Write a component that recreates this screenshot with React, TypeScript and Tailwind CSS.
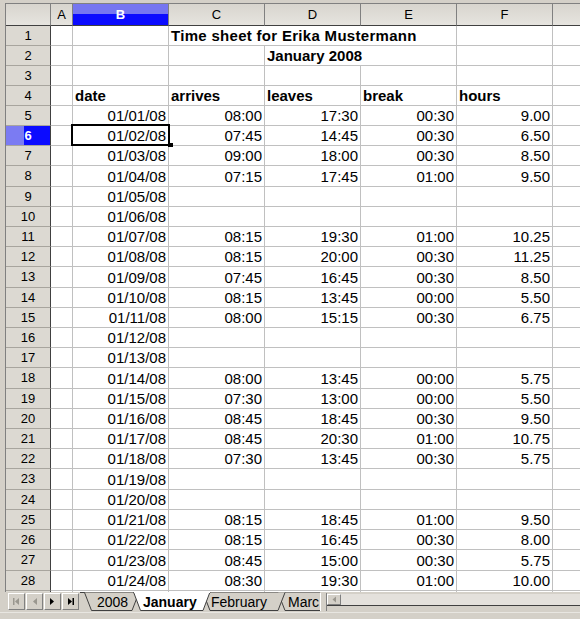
const FONT = "font-['Liberation_Sans',Arial,sans-serif]";

type Entry = [string, string?, string?, string?, string?];

// sheet rows 5..28: date, arrives, leaves, break, hours
const entries: Entry[] = [
  ["01/01/08", "08:00", "17:30", "00:30", "9.00"],
  ["01/02/08", "07:45", "14:45", "00:30", "6.50"],
  ["01/03/08", "09:00", "18:00", "00:30", "8.50"],
  ["01/04/08", "07:15", "17:45", "01:00", "9.50"],
  ["01/05/08"],
  ["01/06/08"],
  ["01/07/08", "08:15", "19:30", "01:00", "10.25"],
  ["01/08/08", "08:15", "20:00", "00:30", "11.25"],
  ["01/09/08", "07:45", "16:45", "00:30", "8.50"],
  ["01/10/08", "08:15", "13:45", "00:00", "5.50"],
  ["01/11/08", "08:00", "15:15", "00:30", "6.75"],
  ["01/12/08"],
  ["01/13/08"],
  ["01/14/08", "08:00", "13:45", "00:00", "5.75"],
  ["01/15/08", "07:30", "13:00", "00:00", "5.50"],
  ["01/16/08", "08:45", "18:45", "00:30", "9.50"],
  ["01/17/08", "08:45", "20:30", "01:00", "10.75"],
  ["01/18/08", "07:30", "13:45", "00:30", "5.75"],
  ["01/19/08"],
  ["01/20/08"],
  ["01/21/08", "08:15", "18:45", "01:00", "9.50"],
  ["01/22/08", "08:15", "16:45", "00:30", "8.00"],
  ["01/23/08", "08:45", "15:00", "00:30", "5.75"],
  ["01/24/08", "08:30", "19:30", "01:00", "10.00"],
];

// a few rows render one pixel taller
const tallRows = [8, 13, 18, 23, 27];

const cell = "w-[96px] shrink-0 border-r border-b border-[#c0c0c0] bg-white flex items-end pb-[1px] leading-[16px] whitespace-nowrap";
const num = `${cell} justify-end pr-[2px]`;
const head = `${cell} pl-[2px] font-bold`;

function RowHeader({ n }: { n: number }) {
  if (n === 6) {
    return (
      <div className="w-[45px] shrink-0 border-r border-r-[#404040] border-b border-b-[#a8a59e] bg-linear-to-r from-[#7b7bf2] from-40% to-[#0b0bff] to-40% flex items-center justify-center text-[13px] font-bold text-white">
        {n}
      </div>
    );
  }
  return (
    <div className="w-[45px] shrink-0 border-r border-r-[#404040] border-b border-b-[#a8a59e] bg-[#dcd9d2] flex items-center justify-center text-[13px] text-black">
      {n}
    </div>
  );
}

function ColA() {
  return <div className="w-[22px] shrink-0 border-r border-b border-[#c0c0c0] bg-white" />;
}

function ColG() {
  return <div className="flex-1 border-b border-[#c0c0c0] bg-white" />;
}

function ColumnHeaders() {
  const letters = ["C", "D", "E", "F"];
  return (
    <div className="flex h-[22px] text-[13px]">
      <div className="w-[45px] shrink-0 border-r border-b border-r-[#808080] border-b-[#404040] bg-linear-to-b from-[#d8d5ce] to-[#e6e4df]" />
      <div className="w-[22px] shrink-0 border-r border-b border-r-[#808080] border-b-[#404040] bg-linear-to-b from-[#d8d5ce] to-[#e6e4df] flex items-center justify-center">
        A
      </div>
      <div className="w-[96px] shrink-0 border-r border-b border-r-[#808080] border-b-[#404040] bg-linear-to-b from-[#7676f0] from-50% to-[#0b0bff] to-50% flex items-center justify-center font-bold text-white">
        B
      </div>
      {letters.map((l) => (
        <div
          key={l}
          className="w-[96px] shrink-0 border-r border-b border-r-[#808080] border-b-[#404040] bg-linear-to-b from-[#d8d5ce] to-[#e6e4df] flex items-center justify-center"
        >
          {l}
        </div>
      ))}
      <div className="flex-1 border-b border-b-[#404040] bg-linear-to-b from-[#d8d5ce] to-[#e6e4df]" />
    </div>
  );
}

function Sheet() {
  return (
    <div className={`h-[589px] overflow-hidden border-l border-t border-[#808080] ml-[5px] mt-[3px] text-[15px] text-black ${FONT}`}>
      <ColumnHeaders />

      {/* 1: title runs across C..E */}
      <div className="flex h-[20px]">
        <RowHeader n={1} />
        <ColA />
        <div className={cell} />
        <div className="w-[288px] shrink-0 border-r border-b border-[#c0c0c0] bg-white flex items-end pb-[1px] pl-[2px] leading-[16px] font-bold tracking-[0.02em] whitespace-nowrap">
          Time sheet for Erika Mustermann
        </div>
        <div className={cell} />
        <ColG />
      </div>

      {/* 2: month */}
      <div className="flex h-[20px]">
        <RowHeader n={2} />
        <ColA />
        <div className={cell} />
        <div className={cell} />
        <div className="w-[192px] shrink-0 border-r border-b border-[#c0c0c0] bg-white flex items-end pb-[1px] pl-[2px] leading-[16px] font-bold whitespace-nowrap">
          January 2008
        </div>
        <div className={cell} />
        <ColG />
      </div>

      <div className="flex h-[20px]">
        <RowHeader n={3} />
        <ColA />
        <div className={cell} />
        <div className={cell} />
        <div className={cell} />
        <div className={cell} />
        <div className={cell} />
        <ColG />
      </div>

      <div className="flex h-[20px]">
        <RowHeader n={4} />
        <ColA />
        <div className={head}>date</div>
        <div className={head}>arrives</div>
        <div className={head}>leaves</div>
        <div className={head}>break</div>
        <div className={head}>hours</div>
        <ColG />
      </div>

      {entries.map((e, i) => {
        const n = i + 5;
        const tall = tallRows.includes(n);
        return (
          <div key={n} className={tall ? "flex h-[21px]" : "flex h-[20px]"}>
            <RowHeader n={n} />
            <ColA />
            <div className={`${num} relative`}>
              {e[0]}
              {n === 6 && (
                <>
                  <div className="absolute -left-[2px] -top-[2px] w-[99px] h-[22px] border-2 border-black z-10" />
                  <div className="absolute left-[95px] top-[17px] w-[5px] h-[4px] bg-black z-20" />
                </>
              )}
            </div>
            <div className={num}>{e[1]}</div>
            <div className={num}>{e[2]}</div>
            <div className={num}>{e[3]}</div>
            <div className={num}>{e[4]}</div>
            <ColG />
          </div>
        );
      })}

      <div className="flex h-[20px]">
        <RowHeader n={29} />
        <ColA />
        <div className={cell} />
        <div className={cell} />
        <div className={cell} />
        <div className={cell} />
        <div className={cell} />
        <ColG />
      </div>
    </div>
  );
}

function NavButton({ dir, end, active }: { dir: "l" | "r"; end?: boolean; active?: boolean }) {
  const c = active ? "#000000" : "#9a978f";
  return (
    <div className="w-[17px] h-[17px] border border-t-white border-l-white border-r-[#808080] border-b-[#808080] bg-[#d4d0c8] flex items-center justify-center">
      <svg width="9" height="9" viewBox="0 0 9 9">
        {dir === "l" ? (
          <>
            {end && <rect x="1" y="1" width="1.5" height="7" fill={c} />}
            <path d="M7 1 L3 4.5 L7 8 Z" fill={c} />
          </>
        ) : (
          <>
            <path d="M2 1 L6 4.5 L2 8 Z" fill={c} />
            {end && <rect x="6.5" y="1" width="1.5" height="7" fill={c} />}
          </>
        )}
      </svg>
    </div>
  );
}

function SheetTabs() {
  return (
    <div className="relative w-[240px] h-[20px] overflow-hidden shrink-0 text-[14px] text-black">
      <svg className="absolute inset-0" width="240" height="20" viewBox="0 0 240 20">
        <line x1="0" y1="0.5" x2="240" y2="0.5" stroke="#404040" />
        {/* Marc */}
        <path d="M198 0.5 L205 18.5 L260 18.5 L267 0.5" fill="#d4d0c8" stroke="#404040" />
        {/* February */}
        <path d="M123 0.5 L130 18.5 L198 18.5 L205 0.5" fill="#d4d0c8" stroke="#404040" />
        {/* 2008 */}
        <path d="M4.5 0.5 L11.5 18.5 L52 18.5 L59 0.5" fill="#d4d0c8" stroke="#404040" />
        {/* January, the open sheet */}
        <path d="M53.5 0 L60.5 18.5 L123 18.5 L130 0" fill="#ffffff" stroke="#404040" />
        <line x1="54" y1="0.5" x2="130" y2="0.5" stroke="#ffffff" />
      </svg>
      <div className="relative flex items-end h-[18px] leading-[16px] whitespace-nowrap">
        <span className="ml-[17px] w-[46px]">2008</span>
        <span className="w-[68px] font-bold">January</span>
        <span className="w-[77px]">February</span>
        <span>Marc</span>
      </div>
    </div>
  );
}

function TabBar() {
  return (
    <div className={`h-[20px] flex items-start bg-[#d4d0c8] ${FONT}`}>
      <div className="flex gap-[1px] pl-[8px] pt-[1px] w-[80px] shrink-0">
        <NavButton dir="l" end />
        <NavButton dir="l" />
        <NavButton dir="r" active />
        <NavButton dir="r" end active />
      </div>
      <SheetTabs />
      <div className="w-[7px] h-[18px] mt-[1px] border-l border-r border-l-white border-r-[#808080] bg-[#d4d0c8] shrink-0" />
      <div className="flex flex-1 h-[12px] mt-[2px] border-b border-[#404040]">
        <div className="w-[14px] h-[11px] border border-t-white border-l-white border-r-[#808080] border-b-[#808080] bg-[#d4d0c8] flex items-center justify-center shrink-0">
          <svg width="6" height="7" viewBox="0 0 6 7">
            <path d="M5 0.5 L1.5 3.5 L5 6.5 Z" fill="#9a978f" />
          </svg>
        </div>
        <div className="flex-1 bg-[#e4e1dc]" />
      </div>
    </div>
  );
}

export default function App() {
  return (
    <div className="w-[580px] h-[619px] bg-[#d4d0c8] overflow-hidden">
      <Sheet />
      <TabBar />
      <div className="h-[6px] border-t border-[#e8e6e1] bg-[#d4d0c8]" />
    </div>
  );
}
